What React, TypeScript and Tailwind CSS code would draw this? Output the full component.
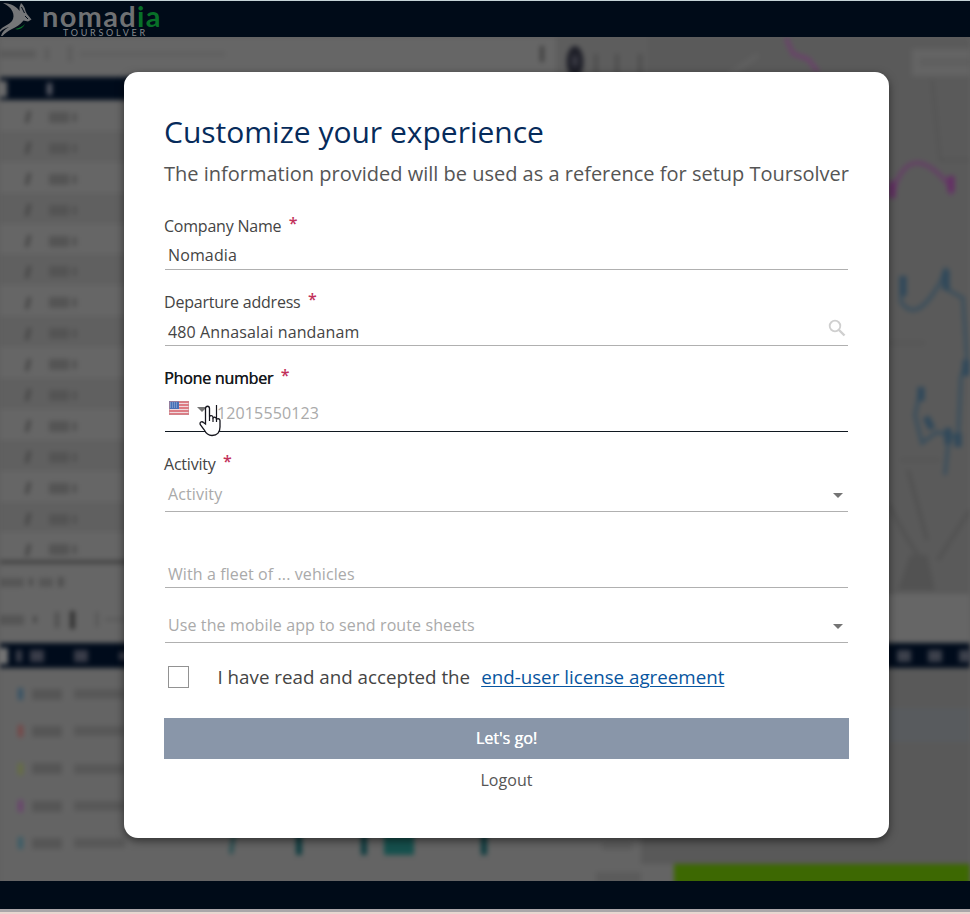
import type { ReactNode } from "react";

const stopColors = ["bg-[#2c4f66]", "bg-[#7a3f3f]", "bg-[#65703a]", "bg-[#6c3b70]", "bg-[#2f5a68]"];

function Logo() {
  return (
    <div className="flex h-full items-start">
      <svg className="mt-px h-9 w-8 shrink-0" viewBox="0 0 32 36">
        <path d="M3 1 C11 1 17 5 19.500 9 L19.500 5 L21 1 C23.500 3 25 6 25.500 9 L27 12 L31.500 17.500 L28 19.500 L23.500 18.500 C20 23 16 25 12 27 C8 29 5 31 2.500 34 L1 34 C2 30 5 27 9 25 C6 26 3 27 0 30 L0 28 C3 24 9 23 12 19 C16 13 12 5 3 1 Z" fill="#747678" />
        <path d="M21.500 5 L24.500 11 M25 14 L28 17" stroke="#000b18" strokeWidth="1" />
        <path d="M25 22 C22 25 19 26 15 27 C19 28.500 23 26 25 22 Z" fill="#087028" />
      </svg>
      <div className="ml-[10px] flex flex-col font-['Lato']">
        <div className="h-[27px] w-[125px] whitespace-nowrap text-[29px] font-bold leading-[29px] tracking-[1.300px] text-[#6f7173]">
          nomad<span className="text-[#087028]">ia</span>
        </div>
        <div className="ml-[21px] h-[9px] whitespace-nowrap text-[9px] leading-[9px] tracking-[2.750px] text-[#85898d]">TOURSOLVER</div>
      </div>
    </div>
  );
}

function Smudge({ className }: { className: string }) {
  return <div className={`shrink-0 ${className}`} />;
}

function StopsTable() {
  return (
    <div className="h-[606px] w-[556px] shrink-0">
      <div className="flex h-[40px] items-center bg-[#666] pb-[6px]">
        <Smudge className="h-2 w-9 bg-[#5b5b5b]" />
        <Smudge className="ml-[9px] h-3 w-1 bg-[#5b5b5b]" />
        <Smudge className="ml-[19px] h-4 w-1 bg-[#5b5b5b]" />
        <Smudge className="ml-[8px] h-1.5 w-[145px] bg-[#616161]" />
        <Smudge className="ml-[315px] h-4 w-1 bg-[#404040]" />
      </div>
      <div className="flex h-[23px] items-center bg-[#000b1b]">
        <Smudge className="h-4 w-[7px] bg-[#6d6d6d]" />
        <Smudge className="ml-[40px] h-3 w-[5px] bg-[#5c5e68]" />
      </div>
      {Array.from({ length: 15 }, (_, i) => (
        <div key={i} className={`flex h-[30.9px] items-center pt-[4px] ${i % 2 ? "bg-[#606060]" : "bg-[#666]"}`}>
          <div className="ml-[26px] h-3 w-[4px] -skew-x-12 bg-[#484848]" />
          <Smudge className="ml-[19px] h-[11px] w-5 bg-[#545454]" />
          <Smudge className="ml-[3px] h-[9px] w-[5px] bg-[#545454]" />
        </div>
      ))}
      <div className="-mt-[3px] h-[4px] bg-[#444]" />
      <div className="flex h-9 items-center bg-[#666]">
        <Smudge className="h-[9px] w-6 bg-[#565656]" />
        <Smudge className="ml-[5px] h-[8px] w-1 bg-[#4d4d4d]" />
        <Smudge className="ml-[6px] h-[9px] w-3.5 bg-[#565656]" />
        <Smudge className="ml-[5px] h-[10px] w-1.5 bg-[#505050]" />
      </div>
      <div className="flex h-[43px] items-center bg-[#666] pb-1">
        <Smudge className="h-[10px] w-6 bg-[#555]" />
        <Smudge className="ml-[9px] h-[7px] w-1 bg-[#4c4c4c]" />
        <Smudge className="ml-[18px] h-[16px] w-1 bg-[#4e4e4e]" />
        <Smudge className="ml-[11px] h-[18px] w-[5px] bg-[#333]" />
        <Smudge className="ml-[21px] h-[15px] w-[2px] bg-[#505050]" />
        <Smudge className="ml-[7px] h-[3px] w-[24px] bg-[#5a5a5a]" />
      </div>
    </div>
  );
}

function MapView() {
  return (
    <div className="h-[606px] w-[414px] shrink-0 bg-[#666]">
      <svg className="block h-[557px] w-[414px] bg-[#5a5a5a]" viewBox="556 37 414 557" fill="none">
        <rect x="556" y="37" width="92" height="40" fill="#5d5d5d" />
        <ellipse cx="575" cy="62" rx="8.500" ry="16" fill="#1e1f28" />
        <ellipse cx="575" cy="61" rx="3" ry="6" fill="#3a3a44" />
        <path d="M596 54v20M617 54v20M640 54v20" stroke="#4e4e4e" strokeWidth="4" />
        <path d="M728 76 L758 55" stroke="#606060" strokeWidth="5" />
        <rect x="912" y="49" width="60" height="27" fill="#646464" />
        <path d="M920 62h50" stroke="#5f5f5f" strokeWidth="8" />
        <path d="M932 80 L940 160 H970 M889 343H925 M900 460H940" stroke="#525252" strokeWidth="2" />
        <path d="M889 505 L905 535 L917 554 L930 590 M938 560 L970 510 M908 470 L927 540" stroke="#525252" strokeWidth="4" />
        <path d="M910 555h17l8 35h-37z" fill="#525252" />
        <path d="M786 38 L793 54 L808 59 L818 72" stroke="#6b416b" strokeWidth="4" />
        <path d="M892 195 C902 158 921 151 949 185 M892 180v18 M951 178v17" stroke="#653f66" strokeWidth="4" />
        <path d="M892 183v15M951 176v16" stroke="#642f65" strokeWidth="7" />
        <path d="M903 278 L901 302 C913 319 926 307 940 283 L946 268 L948 290 L963 298 L967 358 L961 378 L958 438 M945 475 L949 435 M921 388 L915 415 L922 443 L937 432 L958 438" stroke="#394e5c" strokeWidth="3.500" />
        <path d="M903 276v20M946 270v20M921 387v14M926 417l6 12M948 428v16M966 360v16M958 433v14" stroke="#2f485a" strokeWidth="7" />
      </svg>
    </div>
  );
}

function RouteTable() {
  return (
    <div className="flex h-[240px]">
      <div className="w-[641px] shrink-0 bg-[#646464]">
        <div className="h-[8px]" />
        {stopColors.map((color) => (
          <div key={color} className="flex h-[37.300px] items-center border-b border-[#616161]">
            <Smudge className={`ml-[18px] h-3 w-[5px] opacity-80 ${color}`} />
            <Smudge className="ml-[9px] h-[11px] w-[30px] bg-[#565656]" />
            <Smudge className="ml-[12px] h-[10px] w-[51px] bg-[#585858]" />
          </div>
        ))}
        <svg className="-mt-[32px] block h-8 w-[641px]" viewBox="0 832 641 32">
          <path d="M234 834 L231 856" stroke="#2a5053" strokeWidth="4" />
          <path d="M299 832v25M364 832v25M484 832v25" stroke="#0e3d40" strokeWidth="6" />
          <rect x="384" y="832" width="30" height="25" fill="#16504d" />
          <path d="M602 848h30" stroke="#5b5b5b" strokeWidth="8" />
        </svg>
        <div className="ml-[596px] mt-[10px] h-[12px] w-[45px] bg-[#5b5b5b]" />
      </div>
      <div className="flex grow flex-col bg-[#595959]">
        <div className="h-[40px]" />
        <div className="h-[34px] bg-[#585b5e]" />
        <div className="h-[34px]" />
        <div className="h-[88px] bg-[#595959]" />
        <div className="flex h-11 bg-[#646464]">
          <div className="ml-[33px] grow bg-[#3d6802]" />
        </div>
      </div>
    </div>
  );
}

function Backdrop() {
  return (
    <div className="h-[844px] overflow-hidden bg-[#606060]">
      <div className="h-[874px] w-[970px] blur-[2.800px]">
        <div className="flex h-[606px] bg-[#666]">
          <StopsTable />
          <MapView />
        </div>
        <div className="flex h-[25px] items-center bg-[#000b1b]">
          <Smudge className="h-4 w-[8px] bg-[#777]" />
          <Smudge className="ml-[8px] h-3 w-[6px] bg-[#393c48]" />
          <Smudge className="ml-[8px] h-3 w-[14px] bg-[#393c48]" />
          <Smudge className="ml-[30px] h-3 w-[14px] bg-[#393c48]" />
          <Smudge className="ml-[31px] h-2 w-[20px] bg-[#393c48]" />
          <Smudge className="ml-[758px] h-3 w-[14px] bg-[#3c404b]" />
          <Smudge className="ml-[17px] h-3 w-[14px] bg-[#3c404b]" />
          <Smudge className="ml-[17px] h-3 w-[14px] bg-[#3c404b]" />
        </div>
        <RouteTable />
      </div>
    </div>
  );
}

function FieldLabel({ children, active = false }: { children: ReactNode; active?: boolean }) {
  return (
    <div className={`flex h-6 gap-[7.500px] text-[16px] leading-6 tracking-[-0.220px] ${active ? "text-[#16181d] [text-shadow:0.4px_0_0_#16181d]" : "text-[#444]"}`}>
      <span>{children}</span>
      <span className="-mt-[3px] text-[16px] font-semibold text-[#c2315a] [text-shadow:none]">*</span>
    </div>
  );
}

function Caret() {
  return <div className="h-0 w-0 border-x-[5px] border-t-[5px] border-x-transparent border-t-[#747474]" />;
}

function Flag() {
  return (
    <svg className="h-[14px] w-5" viewBox="0 0 20 14">
      <path d="M0 0h20v14H0z" fill="#efd9dc" />
      <path d="M0 1h20M0 4h20M0 7h20M0 10h20M0 13h20" stroke="#d75e67" strokeWidth="1.300" />
      <path d="M0 0h10v8H0z" fill="#466fb5" />
      <path d="M1 2h8M1 4h8M1 6h8" stroke="#bdd0ec" strokeWidth=".8" strokeDasharray="1 1" />
      <path d="M.5 .5h19v13H.5z" fill="none" stroke="#c9868d" strokeWidth=".6" />
    </svg>
  );
}

function HandCursor() {
  return (
    <svg className="absolute left-[34px] top-[7px] h-[32px] w-[22px]" viewBox="0 0 22 32">
      <path d="M6.500 19V3.500c0-3 4-3 4 0V12c0-2 3.500-2 3.500.5v1c0-2 3.500-1.500 3.500.5v1c0-2 3.500-1.500 3.500.5V22c0 5-2.500 8.500-8 8.500-4 0-6-2-8-6L1.500 20C0 17 3 16 4.500 17.500L6.500 19z" fill="white" stroke="#15151d" strokeWidth="1.300" />
      <path d="M10.500 12v4M14 13v4M17.500 14v3M17.500 0v14" stroke="#15151d" strokeWidth="1.200" />
    </svg>
  );
}

function SetupDialog() {
  return (
    <main className="absolute left-[124px] top-[72px] h-[766px] w-[765px] rounded-[14px] bg-white px-10 pt-[39px] shadow-[0_3px_9px_rgba(0,0,0,0.5)]">
      <h1 className="h-[42px] whitespace-nowrap text-[30px] leading-[42px] text-[#062b5b]">Customize your experience</h1>
      <p className="mt-[7px] h-7 whitespace-nowrap text-[20px] leading-7 text-[#555]">The information provided will be used as a reference for setup Toursolver</p>

      <div className="mt-[26px]"><FieldLabel>Company Name</FieldLabel></div>
      <div className="mx-px mt-[5px] h-[27px] border-b border-[#b0b0b0] pl-[3px] text-[16px] leading-6 tracking-[0.130px] text-[#444]">Nomadia</div>

      <div className="mt-5"><FieldLabel>Departure address</FieldLabel></div>
      <div className="mx-px mt-[6px] flex h-[26px] justify-between border-b border-[#b0b0b0] pl-[3px] pr-[2px] text-[16px] leading-6 tracking-[0.130px] text-[#444]">
        <span>480 Annasalai nandanam</span>
        <svg className="-mt-px h-[18px] w-[18px]" viewBox="0 0 18 18" fill="none" stroke="#cfcfcf">
          <circle cx="7" cy="7" r="5.300" strokeWidth="1.800" />
          <path d="M11 11l5.500 5.500" strokeWidth="2.400" />
        </svg>
      </div>

      <div className="mt-5"><FieldLabel active>Phone number</FieldLabel></div>
      <div className="relative mx-px mt-[8px] flex h-[34px] border-b border-[#101820] pl-1">
        <div className="mt-[3px]"><Flag /></div>
        <div className="ml-2 mt-[9px]"><Caret /></div>
        <span className="ml-[10px] mt-[3px] text-[16px] leading-6 tracking-[0.130px] text-[#aaa]">12015550123</span>
        <HandCursor />
      </div>

      <div className="mt-[20px]"><FieldLabel>Activity</FieldLabel></div>
      <div className="mx-px mt-[6px] flex h-[30px] justify-between border-b border-[#b0b0b0] pl-[3px] pr-[5px] text-[16px] leading-6 tracking-[0.130px] text-[#aaa]">
        <span>Activity</span>
        <div className="mt-[11px]"><Caret /></div>
      </div>

      <div className="mx-px mt-[50px] h-[26px] border-b border-[#b0b0b0] pl-[3px] text-[16px] leading-6 tracking-[0.100px] text-[#aaa]">With a fleet of ... vehicles</div>
      <div className="mx-px mt-[25px] flex h-[30px] justify-between border-b border-[#b0b0b0] pl-[3px] pr-[5px] text-[16px] leading-6 tracking-[0.110px] text-[#aaa]">
        <span>Use the mobile app to send route sheets</span>
        <div className="mt-[11px]"><Caret /></div>
      </div>

      <div className="mt-[20px] flex h-7 items-center whitespace-nowrap pl-1 text-[18.750px] leading-7 text-[#444]">
        <span className="h-[22px] w-[21px] border border-[#929292] bg-white" />
        <span className="ml-[28.500px]">I have read and accepted the</span>
        <a className="ml-[11px] text-[#0755a0] underline decoration-1 underline-offset-2">end-user license agreement</a>
      </div>
      <button className="mt-[27px] flex h-[41px] w-[685px] items-center justify-center bg-[#8996a9] pb-[2px] text-[16px] tracking-[0.050px] text-white [text-shadow:0.3px_0_0_#fff]">Let's go!</button>
      <button className="mt-[9px] h-6 w-[685px] text-center text-[16px] leading-6 tracking-[0.050px] text-[#555]">Logout</button>
    </main>
  );
}

export default function App() {
  return (
    <div className="relative h-[914px] w-[970px] overflow-hidden bg-[#606060] font-['Open_Sans',sans-serif]">
      <header className="h-[37px] border-t border-[#c5d3d6] bg-[#000b18]"><Logo /></header>
      <Backdrop />
      <footer className="h-[28px] bg-[#000b18]" />
      <div className="h-[3px] bg-[#aaa6a9]" />
      <div className="h-[2px] bg-[#ead7d1]" />
      <SetupDialog />
    </div>
  );
}
